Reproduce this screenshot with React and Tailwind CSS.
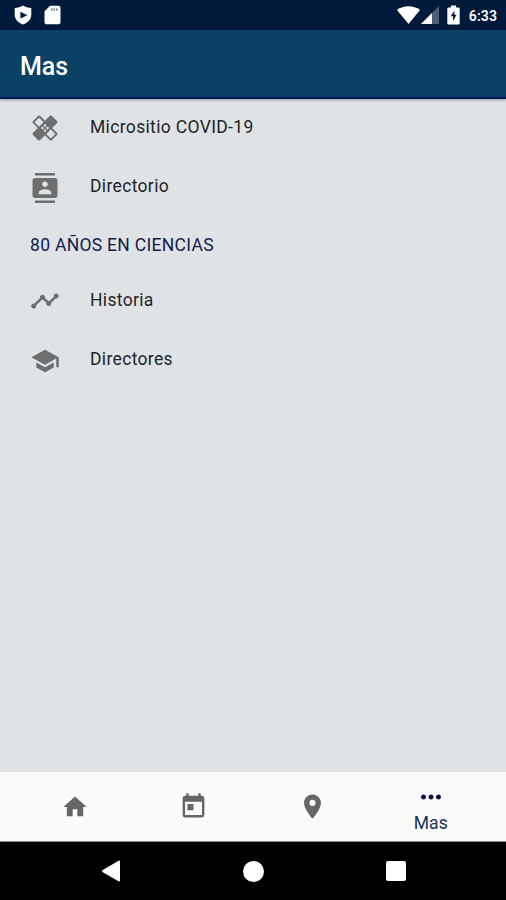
import {
  MdContacts,
  MdHealing,
  MdHome,
  MdMoreHoriz,
  MdPlace,
  MdSchool,
  MdTimeline,
  MdToday,
} from "react-icons/md";

const links = [
  { label: "Micrositio COVID-19", icon: MdHealing },
  { label: "Directorio", icon: MdContacts },
];

const historyLinks = [
  { label: "Historia", icon: MdTimeline },
  { label: "Directores", icon: MdSchool },
];

function StatusBar() {
  return (
    <div className="flex h-[30px] shrink-0 items-center bg-[#001a3b] pr-[9px] pl-[14px] text-white">
      <svg className="h-5 w-[18px]" viewBox="0 0 18 20" fill="currentColor">
        <path
          fillRule="evenodd"
          d="M9 .5C6.5 2.2 3.8 2.9.7 2.9v6.9c0 4.4 3 7.8 8.3 9.7 5.3-1.9 8.3-5.3 8.3-9.7V2.9C14.2 2.9 11.5 2.2 9 .5ZM6.4 6.8v6.8L13.4 10.2Z"
        />
      </svg>
      <svg className="ml-3 h-5 w-[17px]" viewBox="0 0 17 20" fill="currentColor">
        <path d="M6 .8h8.500a2 2 0 0 1 2 2v14.400a2 2 0 0 1-2 2H2.500a2 2 0 0 1-2-2V6.500Z" />
        <path fill="#67718a" d="M7 3.500h1.600v2H7zM9.500 3.500h1.600v2H9.500zM12 3.500h1.600v2H12z" />
      </svg>
      <div className="flex-1" />
      <svg className="h-[18px] w-[23px]" viewBox="0 0 23 18" fill="currentColor">
        <path d="M0 3.900C6.500-.9 16.500-.9 23 3.900L11.500 18Z" />
      </svg>
      <svg className="ml-[1px] h-[18px] w-[18px]" viewBox="0 0 18 18" fill="currentColor">
        <path fill="#4d5e78" d="M18 0v18H0Z" />
        <path d="M11 7v11H0Z" />
      </svg>
      <svg className="ml-[8px] h-5 w-[13px]" viewBox="0 0 13 20" fill="currentColor">
        <path d="M4 .5h5v2h2.500q1.200 0 1.200 1.200v14.600q0 1.200-1.200 1.200h-10Q.3 19.500.3 18.300V3.700Q.3 2.500 1.500 2.500H4Z" />
        <path fill="#001a3b" d="M7.600 5.500 3.600 11.300h2.400V16l3.600-6.200H7.200Z" />
      </svg>
      <span className="ml-[9px] pt-px text-[14px] leading-none font-semibold tracking-[0.1px]">6:33</span>
    </div>
  );
}

function MenuItem({ label, icon: Icon }) {
  return (
    <li className="flex h-[59.5px] items-start pl-[30px]">
      <Icon size={30} className="mt-[14px] text-[#6c6e6f]" />
      <span className="mt-[15.5px] ml-[30px] text-[17.5px] leading-6 tracking-[0.34px] text-[#222527]">
        {label}
      </span>
    </li>
  );
}

function TabBar() {
  return (
    <nav className="flex h-[70px] shrink-0 border-b border-[#8a8a8a] bg-[#fafafa] px-4 text-[#666]">
      <button className="flex flex-1 items-center justify-center">
        <MdHome size={28} />
      </button>
      <button className="flex flex-1 items-center justify-center">
        <MdToday size={29} />
      </button>
      <button className="flex flex-1 items-center justify-center">
        <MdPlace size={29} />
      </button>
      <button className="flex flex-1 flex-col items-center pt-[10px] text-[#10104e]">
        <MdMoreHoriz size={30} />
        <span className="text-[17.5px] leading-[22px] text-[#1a3358]">Mas</span>
      </button>
    </nav>
  );
}

function SystemNav() {
  return (
    <div className="flex h-[58px] shrink-0 items-center justify-between bg-black pr-[100px] pl-[102px] text-white">
      <svg className="h-[22px] w-[18px]" viewBox="0 0 18 22" fill="currentColor">
        <path d="M16.500.7Q18 0 18 1.500v19q0 1.500-1.500.8L.8 12.200Q-.6 11 .8 9.900Z" />
      </svg>
      <div className="size-[21px] rounded-full bg-white" />
      <div className="size-[20px] rounded-[2px] bg-white" />
    </div>
  );
}

export default function App() {
  return (
    <div className="flex h-[900px] w-[506px] flex-col overflow-hidden bg-[#dfe3e6] font-[Roboto,sans-serif]">
      <StatusBar />
      <header className="z-10 flex h-[69px] shrink-0 items-center border-b-2 border-[#08155a] bg-[#0a4266] px-5 pt-[6px] shadow-[0_1px_3px_rgba(0,0,0,0.35)]">
        <h1 className="text-[25px] leading-8 font-medium text-white">Mas</h1>
      </header>
      <main className="flex-1">
        <ul>
          {links.map((item) => (
            <MenuItem key={item.label} {...item} />
          ))}
        </ul>
        <h2 className="flex h-[54px] items-center pt-px pl-[30px] text-[17.5px] tracking-[0.3px] text-[#141b4c]">
          80 AÑOS EN CIENCIAS
        </h2>
        <ul>
          {historyLinks.map((item) => (
            <MenuItem key={item.label} {...item} />
          ))}
        </ul>
      </main>
      <TabBar />
      <SystemNav />
    </div>
  );
}
